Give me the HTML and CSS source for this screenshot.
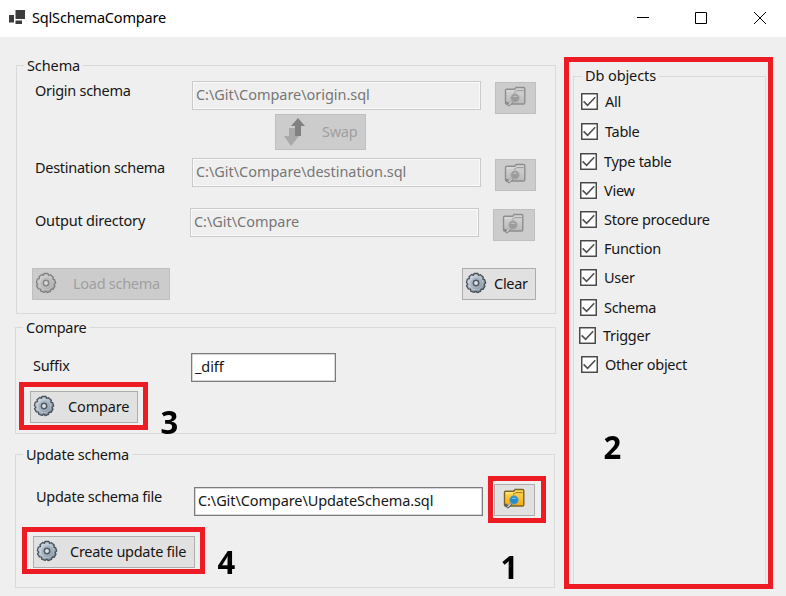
FILE: index.html
```html
<!DOCTYPE html>
<html lang="en">
<head>
<meta charset="utf-8">
<title>SqlSchemaCompare</title>
<link rel="stylesheet" href="styles.css">
</head>
<body>
<svg class="defs" width="0" height="0" aria-hidden="true">
  <defs>
    <linearGradient id="steel" x1="0" y1="0" x2="1" y2="1"><stop offset="0" stop-color="#dde6ee"/><stop offset=".5" stop-color="#a9b7c4"/><stop offset="1" stop-color="#667684"/></linearGradient>
    <linearGradient id="gold" x1="0" y1="0" x2="0" y2="1"><stop offset="0" stop-color="#ffdf62"/><stop offset="1" stop-color="#f7a80c"/></linearGradient>
    <symbol id="gear" viewBox="0 0 22 22">
      <path d="M9 1.500h4l.6 2 1.900-.8 2.900 2.500-.8 2 2.100.5 1 3.300-1.700 1.300 1 1.900-1.900 3.200-2.100-.2-.4 2.200-3.500 1.300-1.400-1.700-1.500 1.400-3.500-1.200-.2-2.100-2.200-.2L1.500 13.600l1.400-1.500-1.500-1.500.9-3.500 2.200-.4-.5-2 2.700-2.300 1.800.9z" fill="url(#steel)" stroke="#4a5259" stroke-width="1.300" stroke-linejoin="round"/>
      <circle cx="11" cy="11" r="6.900" fill="none" stroke="#cbd6df" stroke-width="1" opacity=".6"/>
      <circle cx="11" cy="11" r="4.800" fill="none" stroke="#a4b1bd" stroke-width="1"/>
      <circle cx="11" cy="11" r="2.700" fill="#dce2e7" stroke="#4f5962" stroke-width="1.500"/>
    </symbol>
    <symbol id="folder" viewBox="0 0 22 21">
      <path d="M1.500 4.500q0-1.200 1.200-1.200h8l1.300-1.800h7.500q1.300 0 1.300 1.200v14q0 1.300-1.300 1.300H2.800q-1.300 0-1.300-1.300z" fill="url(#gold)" stroke="#7b6426" stroke-width="1.400"/>
      <path d="M10 6h1.300l1.400-1.400h7" fill="none" stroke="#a37618" stroke-width="1"/>
      <path d="M2.600 5h7.600" stroke="#ffec96" stroke-width="1"/>
      <path d="M8 16l-3 3-2-2" fill="none" stroke="#596066" stroke-width="2.600" stroke-linecap="round" stroke-linejoin="round"/>
      <path d="M7.700 15.800l-2.700 2.700" stroke="#d5d9dc" stroke-width="1.200" stroke-linecap="round"/>
      <circle cx="11" cy="12" r="4.300" fill="#258bd0" stroke="#7fa89a" stroke-width="1"/>
      <path d="M8.500 11q2.500-3 5 0z" fill="#70c8f5"/>
    </symbol>
    <symbol id="check" viewBox="0 0 17 17">
      <rect x=".75" y=".75" width="15.500" height="15.500" fill="#fff" stroke="#404040" stroke-width="1.400"/>
      <path d="M2.600 8.400l4 4 7.600-8.100" fill="none" stroke="#505050" stroke-width="1.600"/>
    </symbol>
  </defs>
</svg>

<header class="titlebar">
  <svg class="app-icon" width="16" height="14" viewBox="0 0 16 14"><path fill="#3c3c3c" d="M0 5h5v7.500H0zM6.500 0H16v9H6.500zM6.500 10.500H13V14H6.500z"/></svg>
  <h1 class="title">SqlSchemaCompare</h1>
  <svg class="window-buttons" width="130" height="14" viewBox="0 0 130 14" fill="none" stroke="#000"><path d="M0 6.500h12"/><path d="M58.500 1.500h11v11h-11z"/><path d="M117 1l12 12M129 1l-12 12"/></svg>
</header>

<main class="content">
  <div class="forms">
    <section class="group schema">
      <h2 class="legend">Schema</h2>
      <div class="row row-origin">
        <label class="label">Origin schema</label>
        <div class="input disabled">C:\Git\Compare\origin.sql</div>
        <button class="btn browse disabled"><svg width="22" height="21"><use href="#folder"/></svg></button>
      </div>
      <div class="row row-swap">
        <button class="btn swap disabled">
          <svg width="22" height="28" viewBox="0 0 22 28"><path d="M5 10h6v8h4L7 28 0 18h5z" fill="#a9a9a9"/><path d="M14 0l7 8h-4v10h-6V8H7z" fill="#818181"/></svg>
          <span>Swap</span>
        </button>
      </div>
      <div class="row row-destination">
        <label class="label">Destination schema</label>
        <div class="input disabled">C:\Git\Compare\destination.sql</div>
        <button class="btn browse disabled"><svg width="22" height="21"><use href="#folder"/></svg></button>
      </div>
      <div class="row row-output">
        <label class="label">Output directory</label>
        <div class="input disabled">C:\Git\Compare</div>
        <button class="btn browse disabled"><svg width="22" height="21"><use href="#folder"/></svg></button>
      </div>
      <div class="row row-actions">
        <button class="btn load disabled"><svg width="22" height="22"><use href="#gear"/></svg><span>Load schema</span></button>
        <button class="btn clear"><svg width="22" height="22"><use href="#gear"/></svg><span>Clear</span></button>
      </div>
    </section>

    <section class="group compare">
      <h2 class="legend">Compare</h2>
      <div class="row row-suffix">
        <label class="label">Suffix</label>
        <div class="input">_diff</div>
      </div>
      <div class="mark mark-compare">
        <button class="btn"><svg width="22" height="22"><use href="#gear"/></svg><span>Compare</span></button>
        <b class="step step-3">3</b>
      </div>
    </section>

    <section class="group update">
      <h2 class="legend">Update schema</h2>
      <div class="row row-file">
        <label class="label">Update schema file</label>
        <div class="input">C:\Git\Compare\UpdateSchema.sql</div>
        <div class="mark mark-browse">
          <button class="btn browse"><svg width="22" height="21"><use href="#folder"/></svg></button>
          <b class="step step-1">1</b>
        </div>
      </div>
      <div class="mark mark-create">
        <button class="btn"><svg width="22" height="22"><use href="#gear"/></svg><span>Create update file</span></button>
        <b class="step step-4">4</b>
      </div>
    </section>
  </div>

  <aside class="mark objects">
    <section class="group object-list">
      <h2 class="legend">Db objects</h2>
      <ul class="checks">
        <li class="out"><svg width="17" height="17"><use href="#check"/></svg><span>All</span></li>
        <li class="out"><svg width="17" height="17"><use href="#check"/></svg><span>Table</span></li>
        <li><svg width="17" height="17"><use href="#check"/></svg><span>Type table</span></li>
        <li><svg width="17" height="17"><use href="#check"/></svg><span>View</span></li>
        <li><svg width="17" height="17"><use href="#check"/></svg><span>Store procedure</span></li>
        <li><svg width="17" height="17"><use href="#check"/></svg><span>Function</span></li>
        <li><svg width="17" height="17"><use href="#check"/></svg><span>User</span></li>
        <li><svg width="17" height="17"><use href="#check"/></svg><span>Schema</span></li>
        <li class="in"><svg width="17" height="17"><use href="#check"/></svg><span>Trigger</span></li>
        <li class="out"><svg width="17" height="17"><use href="#check"/></svg><span>Other object</span></li>
      </ul>
    </section>
    <b class="step step-2">2</b>
  </aside>
</main>
</body>
</html>
```
FILE: styles.css
```css
* { box-sizing: border-box; }
body {
  margin: 0;
  width: 786px;
  height: 596px;
  overflow: hidden;
  background: #efefef;
  color: #161616;
  font: 14.5px/20px "Noto Sans", "Open Sans", sans-serif;
  letter-spacing: -0.28px;
  white-space: nowrap;
}
.defs { position: absolute; }
svg { display: block; flex: none; }

.titlebar {
  display: flex;
  align-items: center;
  height: 37px;
  padding: 0 19px 2px 9px;
  background: #fff;
}
.app-icon { margin-top: -2px; }
.title {
  margin: -2px auto 0 7px;
  font-size: 14.5px;
  font-weight: 400;
  letter-spacing: -0.17px;
  color: #000;
}
.window-buttons { width: 130px; }

.content { display: flex; gap: 8px; padding: 20px 13px 0 15px; }
.forms { width: 541px; padding-top: 8px; }

.group { position: relative; border: 1px solid #dadada; }
.legend {
  position: absolute;
  top: -11px;
  left: 7px;
  margin: 0;
  padding: 0 3px;
  background: #efefef;
  font-size: inherit;
  font-weight: 400;
}
.schema { height: 249px; margin-left: 1px; padding: 15px 0 0 15px; }
.schema .legend { letter-spacing: -0.1px; }
.compare { height: 107px; margin-top: 13px; padding: 25px 0 0 1px; }
.update { width: 540px; height: 134px; margin-top: 20px; padding: 21px 0 0 1px; }

.row { display: flex; align-items: flex-start; }
.label { padding-left: 3px; width: 160px; flex: none; margin-top: -1px; }
.input {
  width: 289px;
  height: 29px;
  flex: none;
  padding: 2px 3px;
  line-height: 21px;
  letter-spacing: -0.1px;
  background: #fff;
  border: 1px solid #7c7c7c;
  box-shadow: inset 0 0 0 .5px #b0b0b0;
}
.input.disabled {
  color: #777;
  line-height: 20px;
  letter-spacing: -0.04px;
  background: #efefef;
  border-color: #cacaca;
  box-shadow: inset 0 0 0 1px #fafafa;
}
.btn {
  display: flex;
  align-items: center;
  height: 32px;
  padding: 0 2px 2px;
  flex: none;
  font: inherit;
  letter-spacing: inherit;
  color: #161616;
  background: #e1e1e1;
  border: 1px solid #adadad;
}
.btn.disabled { color: #a0a0a0; background: #ccc; border-color: #bfbfbf; }
.btn.disabled svg { filter: grayscale(1) opacity(.6); }
.btn.swap svg { filter: none; margin: 1px 0 0 1px; }
.browse { width: 41px; justify-content: center; padding: 0 4px 3px 2px; }

.row-origin { height: 33px; }
.row-origin .browse { margin: 1px 0 0 14px; }
.row-swap { height: 44px; padding-left: 243px; }
.swap { width: 91px; height: 36px; padding-left: 7px; gap: 16px; }
.row-destination { height: 50px; }
.row-destination .browse { margin: 1px 0 0 14px; }
.row-output { height: 60px; }
.row-output .label { width: 158px; padding-top: 3px; letter-spacing: -0.2px; }
.row-output .browse { margin: 1px 0 0 14px; width: 42px; }
.row-actions { justify-content: space-between; padding-right: 19px; }
.load { width: 138px; gap: 16px; }
.clear { width: 74px; gap: 7px; }

.row-suffix .label { width: 174px; padding: 3px 0 0 16px; }
.row-suffix .input { width: 145px; }

.mark { position: relative; border: 5px solid #ed1c24; }
.mark-compare { width: 129px; height: 48px; margin-left: 2px; padding: 4px 0 0 6px; }
.mark-compare .btn { width: 108px; gap: 13px; letter-spacing: -0.15px; }
.row-file .label { width: 177px; padding: 11px 0 0 19px; }
.row-file .input { margin-top: 11px; }
.mark-browse { width: 58px; height: 47px; margin-left: 5px; padding: 3px 0 0 1px; }
.mark-create { width: 183px; height: 47px; margin: 4px 0 0 5px; padding: 4px 0 0 6px; }
.mark-create .btn { width: 162px; gap: 12px; }

.objects { width: 209px; height: 532px; padding: 14px 2px 0 4px; }
.object-list { height: 508px; border-bottom: 0; }
.object-list .legend { top: -12px; left: 8px; letter-spacing: -0.1px; }
.checks {
  display: grid;
  grid-template-rows: 30px 30px 29px 29px 29px 29px 30px 28px 29px 30px;
  margin: 0;
  padding: 11px 0 0 6px;
  list-style: none;
}
.checks li { display: flex; gap: 7px; padding-top: 5px; }
.checks span { margin-top: -2px; }
.checks .out { margin-left: 1px; }
.checks .in { margin-left: -1px; }

.step {
  position: absolute;
  color: #000;
  font: 700 33px/40px "Open Sans", "Noto Sans", sans-serif;
  letter-spacing: 0;
  transform: scaleX(.94);
}
.step-1 { left: 7px; top: 66px; }
.step-2 { left: 34px; top: 365px; }
.step-3 { left: 136px; top: 15px; }
.step-4 { left: 190px; top: 10px; }
```
